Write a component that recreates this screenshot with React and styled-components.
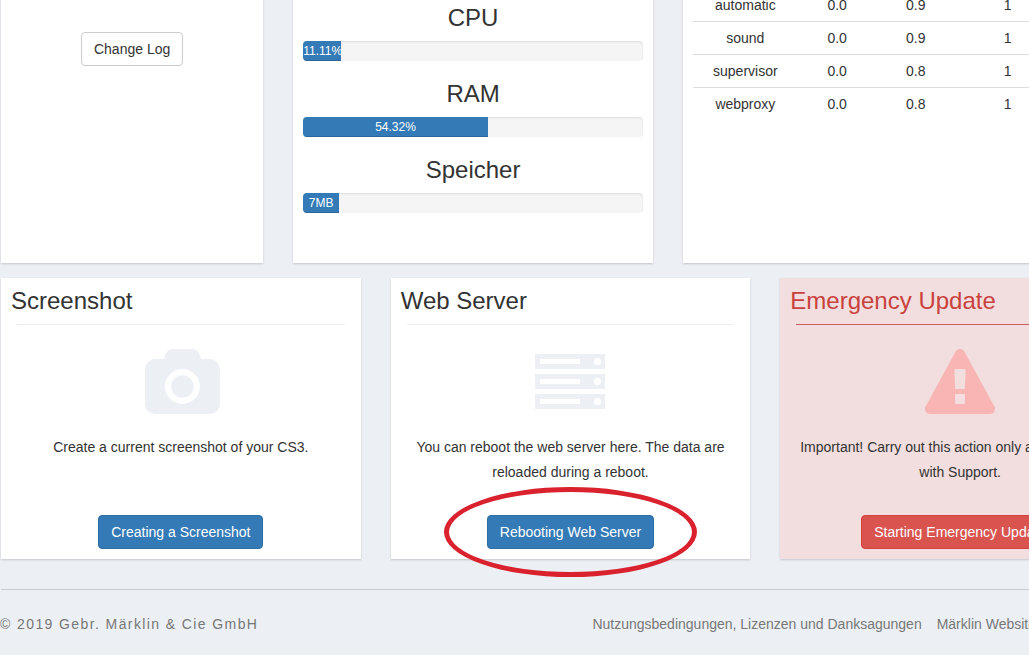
import React from "react";
import styled, { createGlobalStyle, css } from "styled-components";

const GlobalStyle = createGlobalStyle`
    * {
        box-sizing: border-box;
    }
    body {
        margin: 0;
        background-color: #ecf0f5;
        color: #333333;
        font-family: "Liberation Sans", Arial, Helvetica, sans-serif;
        font-size: 14px;
        line-height: 20px;
    }
`;

const Page = styled.div`
    overflow: hidden;
`;

const Container = styled.main`
    min-width: 1139px;
    margin-left: 1px;
`;

const Row = styled.div`
    display: grid;
    grid-template-columns: repeat(12, 1fr);
    column-gap: 30px;
    margin-bottom: 15px;
`;

const StatusRow = styled(Row)`
    margin-top: -12px;
    min-height: 275px;
`;

const Card = styled.section`
    grid-column: span ${({ $span }) => $span};
    min-width: 0;
    padding: 0 10px 10px;
    background-color: ${({ $danger }) => ($danger ? "#f2dede" : "#ffffff")};
    box-shadow: 0 1px 2px rgba(0, 0, 0, 0.18);
`;

const VersionCard = styled(Card)`
    padding-top: 44px;
    text-align: center;
`;

const UsageCard = styled(Card)`
    padding-top: 17px;
`;

const ActionCard = styled(Card)`
    display: flex;
    flex-direction: column;
    padding-top: 10px;
`;

const Button = styled.button`
    height: 34px;
    padding: 6px 12px;
    border: 1px solid #cccccc;
    border-radius: 4px;
    background-color: #ffffff;
    color: #333333;
    font-family: inherit;
    font-size: 14px;
    line-height: 20px;
    white-space: nowrap;
    cursor: pointer;

    ${({ $kind }) => $kind === "primary" && css`
        border-color: #2e6da4;
        background-color: #337ab7;
        color: #ffffff;
    `}

    ${({ $kind }) => $kind === "danger" && css`
        border-color: #d43f3a;
        background-color: #d9534f;
        color: #ffffff;
    `}
`;

const UsageTitle = styled.h3`
    margin: 0 0 10px;
    font-size: 24px;
    font-weight: 400;
    line-height: 26px;
    text-align: center;
`;

const Progress = styled.div`
    height: 20px;
    margin-bottom: 20px;
    overflow: hidden;
    border-radius: 4px;
    background-color: #f5f5f5;
    box-shadow: inset 0 1px 2px rgba(0, 0, 0, 0.1);
`;

const ProgressBar = styled.div`
    height: 100%;
    background-color: #337ab7;
    box-shadow: inset 0 -1px 0 rgba(0, 0, 0, 0.15);
    color: #ffffff;
    font-size: 12px;
    line-height: 20px;
    text-align: center;
`;

const Table = styled.table`
    width: 100%;
    table-layout: fixed;
    border-collapse: collapse;
    text-align: center;
`;

const Cell = styled.td`
    width: ${({ $width }) => $width};
    padding: 6px;
    border-top: 1px solid #dddddd;

    &:last-child {
        padding-right: 76px;
    }
`;

const CardTitle = styled.h3`
    margin: 0;
    font-size: 24px;
    font-weight: 400;
    line-height: 26px;
    color: ${({ $danger }) => ($danger ? "#c9413d" : "#333333")};
`;

const Divider = styled.hr`
    width: calc(100% - 12px);
    margin: 10px 6px 24px;
    border: 0;
    border-top: 1px solid ${({ $danger }) => ($danger ? "#c9605e" : "#eeeeee")};
`;

const Icon = styled.svg`
    display: block;
    align-self: center;
    height: 65px;
    fill: ${({ $danger }) => ($danger ? "#f9b4b4" : "#ecf0f5")};
`;

const Description = styled.p`
    min-height: 50px;
    margin: 21px 0 30px;
    line-height: 25px;
    text-align: center;
`;

const Action = styled.div`
    position: relative;
    align-self: center;

    ${({ $marked }) => $marked && css`
        &::after {
            content: "";
            position: absolute;
            inset: -28px -43px;
            border: 5px solid #d9222e;
            border-radius: 50%;
            pointer-events: none;
        }
    `}
`;

const Footer = styled.footer`
    display: flex;
    justify-content: space-between;
    min-width: 1139px;
    margin: 30px 0 0 1px;
    padding: 24px 0 21px;
    border-top: 1px solid #c8ccd1;
    color: #777777;
`;

const Copyright = styled.span`
    margin-left: -1px;
    letter-spacing: 0.1em;
`;

const FooterNav = styled.nav`
    display: flex;
    gap: 15px;
    padding-right: 104px;
`;

const FooterLink = styled.a`
    color: inherit;
    text-decoration: none;
`;

const usage = [
    { name: "CPU", value: 11.11, label: "11.11%" },
    { name: "RAM", value: 54.32, label: "54.32%" },
    { name: "Speicher", value: 10.5, label: "7MB" },
];

const processes = [
    ["automatic", "0.0", "0.9", "1"],
    ["sound", "0.0", "0.9", "1"],
    ["supervisor", "0.0", "0.8", "1"],
    ["webproxy", "0.0", "0.8", "1"],
];

const columnWidths = ["24%", "18%", "18%", "40%"];

const actions = [
    {
        title: "Screenshot",
        text: "Create a current screenshot of your CS3.",
        button: "Creating a Screenshot",
        viewBox: "-100 0 2020 1664",
        path: "M960 672q119 0 203.5 84.5t84.5 203.5-84.5 203.5-203.5 84.5-203.5-84.5-84.5-203.5 84.5-203.5 203.5-84.5zm704-416q106 0 181 75t75 181v896q0 106-75 181t-181 75h-1408q-106 0-181-75t-75-181v-896q0-106 75-181t181-75h224l51-136q19-49 69.5-84.5t103.5-35.5h512q53 0 103.5 35.5t69.5 84.5l51 136h224zm-704 1152q185 0 316.5-131.5t131.5-316.5-131.5-316.5-316.5-131.5-316.5 131.5-131.5 316.5 131.5 316.5 316.5 131.5z",
    },
    {
        title: "Web Server",
        text: "You can reboot the web server here. The data are reloaded during a reboot.",
        button: "Rebooting Web Server",
        marked: true,
        viewBox: "0 0 1792 1664",
        path: "M128 1408h1024v-128h-1024v128zm0-512h1024v-128h-1024v128zm1568 448q0-40-28-68t-68-28-68 28-28 68 28 68 68 28 68-28 28-68zm-1568-960h1024v-128h-1024v128zm1568 448q0-40-28-68t-68-28-68 28-28 68 28 68 68 28 68-28 28-68zm0-512q0-40-28-68t-68-28-68 28-28 68 28 68 68 28 68-28 28-68zm96 832v384h-1792v-384h1792zm0-512v384h-1792v-384h1792zm0-512v384h-1792v-384h1792z",
    },
    {
        title: "Emergency Update",
        text: "Important! Carry out this action only after consulting with Support.",
        button: "Starting Emergency Update",
        danger: true,
        viewBox: "0 0 1792 1664",
        path: "M1024 1375v-190q0-14-9.5-23.5t-22.5-9.5h-192q-13 0-22.5 9.5t-9.5 23.5v190q0 14 9.5 23.5t22.5 9.5h192q13 0 22.5-9.5t9.5-23.5zm-2-374l18-459q0-12-10-19-13-11-24-11h-220q-11 0-24 11-10 7-10 21l17 457q0 10 10 16.5t24 6.5h185q14 0 23.5-6.5t10.5-16.5zm-14-934l768 1408q35 63-2 126-17 29-46.5 46t-63.5 17h-1536q-34 0-63.5-17t-46.5-46q-37-63-2-126l768-1408q17-31 47-49t65-18 65 18 47 49z",
    },
];

const Usage = ({ name, value, label }) => (
    <>
        <UsageTitle>{name}</UsageTitle>
        <Progress role="progressbar" aria-label={name} aria-valuenow={value}>
            <ProgressBar style={{ width: `${value}%` }}>{label}</ProgressBar>
        </Progress>
    </>
);

const ActionPanel = ({ title, text, button, danger, marked, viewBox, path }) => (
    <ActionCard $span={4} $danger={danger}>
        <CardTitle $danger={danger}>{title}</CardTitle>
        <Divider $danger={danger} />
        <Icon viewBox={viewBox} $danger={danger} aria-hidden="true">
            <path fillRule="evenodd" d={path} />
        </Icon>
        <Description>{text}</Description>
        <Action $marked={marked}>
            <Button type="button" $kind={danger ? "danger" : "primary"}>{button}</Button>
        </Action>
    </ActionCard>
);

const App = () => {
    return (
        <Page>
            <GlobalStyle />
            <Container>
                <StatusRow>
                    <VersionCard $span={3}>
                        <Button type="button">Change Log</Button>
                    </VersionCard>
                    <UsageCard $span={4}>
                        {usage.map((item) => <Usage key={item.name} {...item} />)}
                    </UsageCard>
                    <Card $span={5}>
                        <Table>
                            <tbody>
                                {processes.map((row) => (
                                    <tr key={row[0]}>
                                        {row.map((value, i) => (
                                            <Cell key={i} $width={columnWidths[i]}>{value}</Cell>
                                        ))}
                                    </tr>
                                ))}
                            </tbody>
                        </Table>
                    </Card>
                </StatusRow>
                <Row>
                    {actions.map((item) => <ActionPanel key={item.title} {...item} />)}
                </Row>
            </Container>
            <Footer>
                <Copyright>© 2019 Gebr. Märklin &amp; Cie GmbH</Copyright>
                <FooterNav>
                    <FooterLink href="#terms">Nutzungsbedingungen, Lizenzen und Danksagungen</FooterLink>
                    <FooterLink href="#website">Märklin Website</FooterLink>
                </FooterNav>
            </Footer>
        </Page>
    );
};

export default App;
